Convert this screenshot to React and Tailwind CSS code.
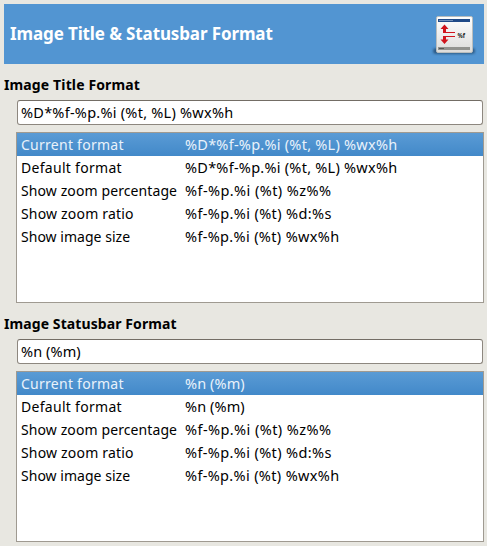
const titleRows = [
  { name: "Current format", nameTracking: "tracking-[0.26px]", value: "%D*%f-%p.%i (%t, %L) %wx%h", valueTracking: "tracking-[0.25px]" },
  { name: "Default format", nameTracking: "tracking-[0.29px]", value: "%D*%f-%p.%i (%t, %L) %wx%h", valueTracking: "tracking-[0.25px]" },
  { name: "Show zoom percentage", nameTracking: "tracking-[0.1px]", value: "%f-%p.%i (%t) %z%%", valueTracking: "tracking-[0.42px]" },
  { name: "Show zoom ratio", nameTracking: "tracking-[0.18px]", value: "%f-%p.%i (%t) %d:%s", valueTracking: "tracking-[0.37px]" },
  { name: "Show image size", nameTracking: "tracking-[0.03px]", value: "%f-%p.%i (%t) %wx%h", valueTracking: "tracking-[0.34px]" },
];

const statusRows = [
  { ...titleRows[0], value: "%n (%m)", valueTracking: "tracking-[0.1px]" },
  { ...titleRows[1], value: "%n (%m)", valueTracking: "tracking-[0.1px]" },
  ...titleRows.slice(2),
];

function FormatIcon() {
  return (
    <svg width="46" height="44" viewBox="0 0 46 44" className="mt-1 block">
      <defs>
        <linearGradient id="paper" x1="0" y1="0" x2="0" y2="1">
          <stop offset="0" stopColor="#ffffff" />
          <stop offset="1" stopColor="#dcdcda" />
        </linearGradient>
        <filter id="soft" x="-20%" y="-100%" width="140%" height="300%">
          <feGaussianBlur stdDeviation="1.3" />
        </filter>
      </defs>
      <rect x="2" y="34" width="42" height="6" rx="3" fill="#1d4468" opacity="0.7" filter="url(#soft)" />
      <rect x="5.500" y="2.500" width="36" height="36" rx="1.5" fill="url(#paper)" stroke="#b9bdbd" />
      <rect x="7" y="5" width="32" height="3" fill="#204a87" />
      <rect x="8" y="6" width="14" height="1" fill="#6f8fba" />
      <rect x="7" y="33" width="32" height="3" fill="#92938f" />
      <rect x="8" y="34" width="5" height="1" fill="#555753" />
      <path d="M13.500 10.500L17.500 15H15V18H24V19H12V15H9.500Z" fill="#d0141c" />
      <path d="M12 22H24V23H15V25.500H17.500L13.500 30L9.500 25.500H12Z" fill="#d0141c" />
      <text x="26.500" y="23.500" fontSize="7" fontWeight="700" fontFamily="Noto Sans, sans-serif" textLength="7.500" lengthAdjust="spacingAndGlyphs" fill="#222">%f</text>
    </svg>
  );
}

function FormatSection({ title, titleClass, value, valueClass, rows }) {
  return (
    <section className="h-[239px]">
      <h2 className={`ml-1 flex h-9 items-center pt-1.5 text-sm font-bold ${titleClass}`}><span>{title}</span></h2>
      <div className="ml-[17px] mr-1 flex h-[25px] items-center rounded-[3px] border border-[#8d877f] border-t-[#736d65] bg-white pl-[3px] text-[14.5px]">
        <span className={valueClass}>{value}</span>
      </div>
      <div className="ml-4 mr-[3px] mt-[7px] h-[171px] border border-[#9f9a91] bg-white">
        {rows.map((row, i) => (
          <div
            key={row.name}
            className={`grid h-[23px] grid-cols-[164px_1fr] items-center pl-1 ${
              i === 0 ? "bg-linear-to-b from-[#5a9bd5] to-[#4289c9] text-[#e9f2fb]" : ""
            }`}
          >
            <span className={row.nameTracking}>{row.name}</span>
            <span className={`text-[14.5px] ${row.valueTracking}`}>{row.value}</span>
          </div>
        ))}
      </div>
    </section>
  );
}

export default function App() {
  return (
    <main className="h-[546px] w-[487px] overflow-hidden whitespace-nowrap bg-[#e8e7e1] pt-1 font-['Noto_Sans',sans-serif] text-sm leading-none text-black">
      <header className="ml-1 mr-[3px] flex h-[60px] items-center justify-between bg-[#5295d2] pl-1.5 pr-[7px]">
        <h1 className="pb-0.5 text-[17px] font-bold tracking-[-0.12px] text-white"><span>Image Title &amp; Statusbar Format</span></h1>
        <FormatIcon />
      </header>
      <FormatSection title="Image Title Format" titleClass="tracking-[0.13px]" value="%D*%f-%p.%i (%t, %L) %wx%h" valueClass="tracking-[0.25px]" rows={titleRows} />
      <FormatSection title="Image Statusbar Format" titleClass="tracking-[0.09px]" value="%n (%m)" valueClass="tracking-[0.1px]" rows={statusRows} />
    </main>
  );
}
